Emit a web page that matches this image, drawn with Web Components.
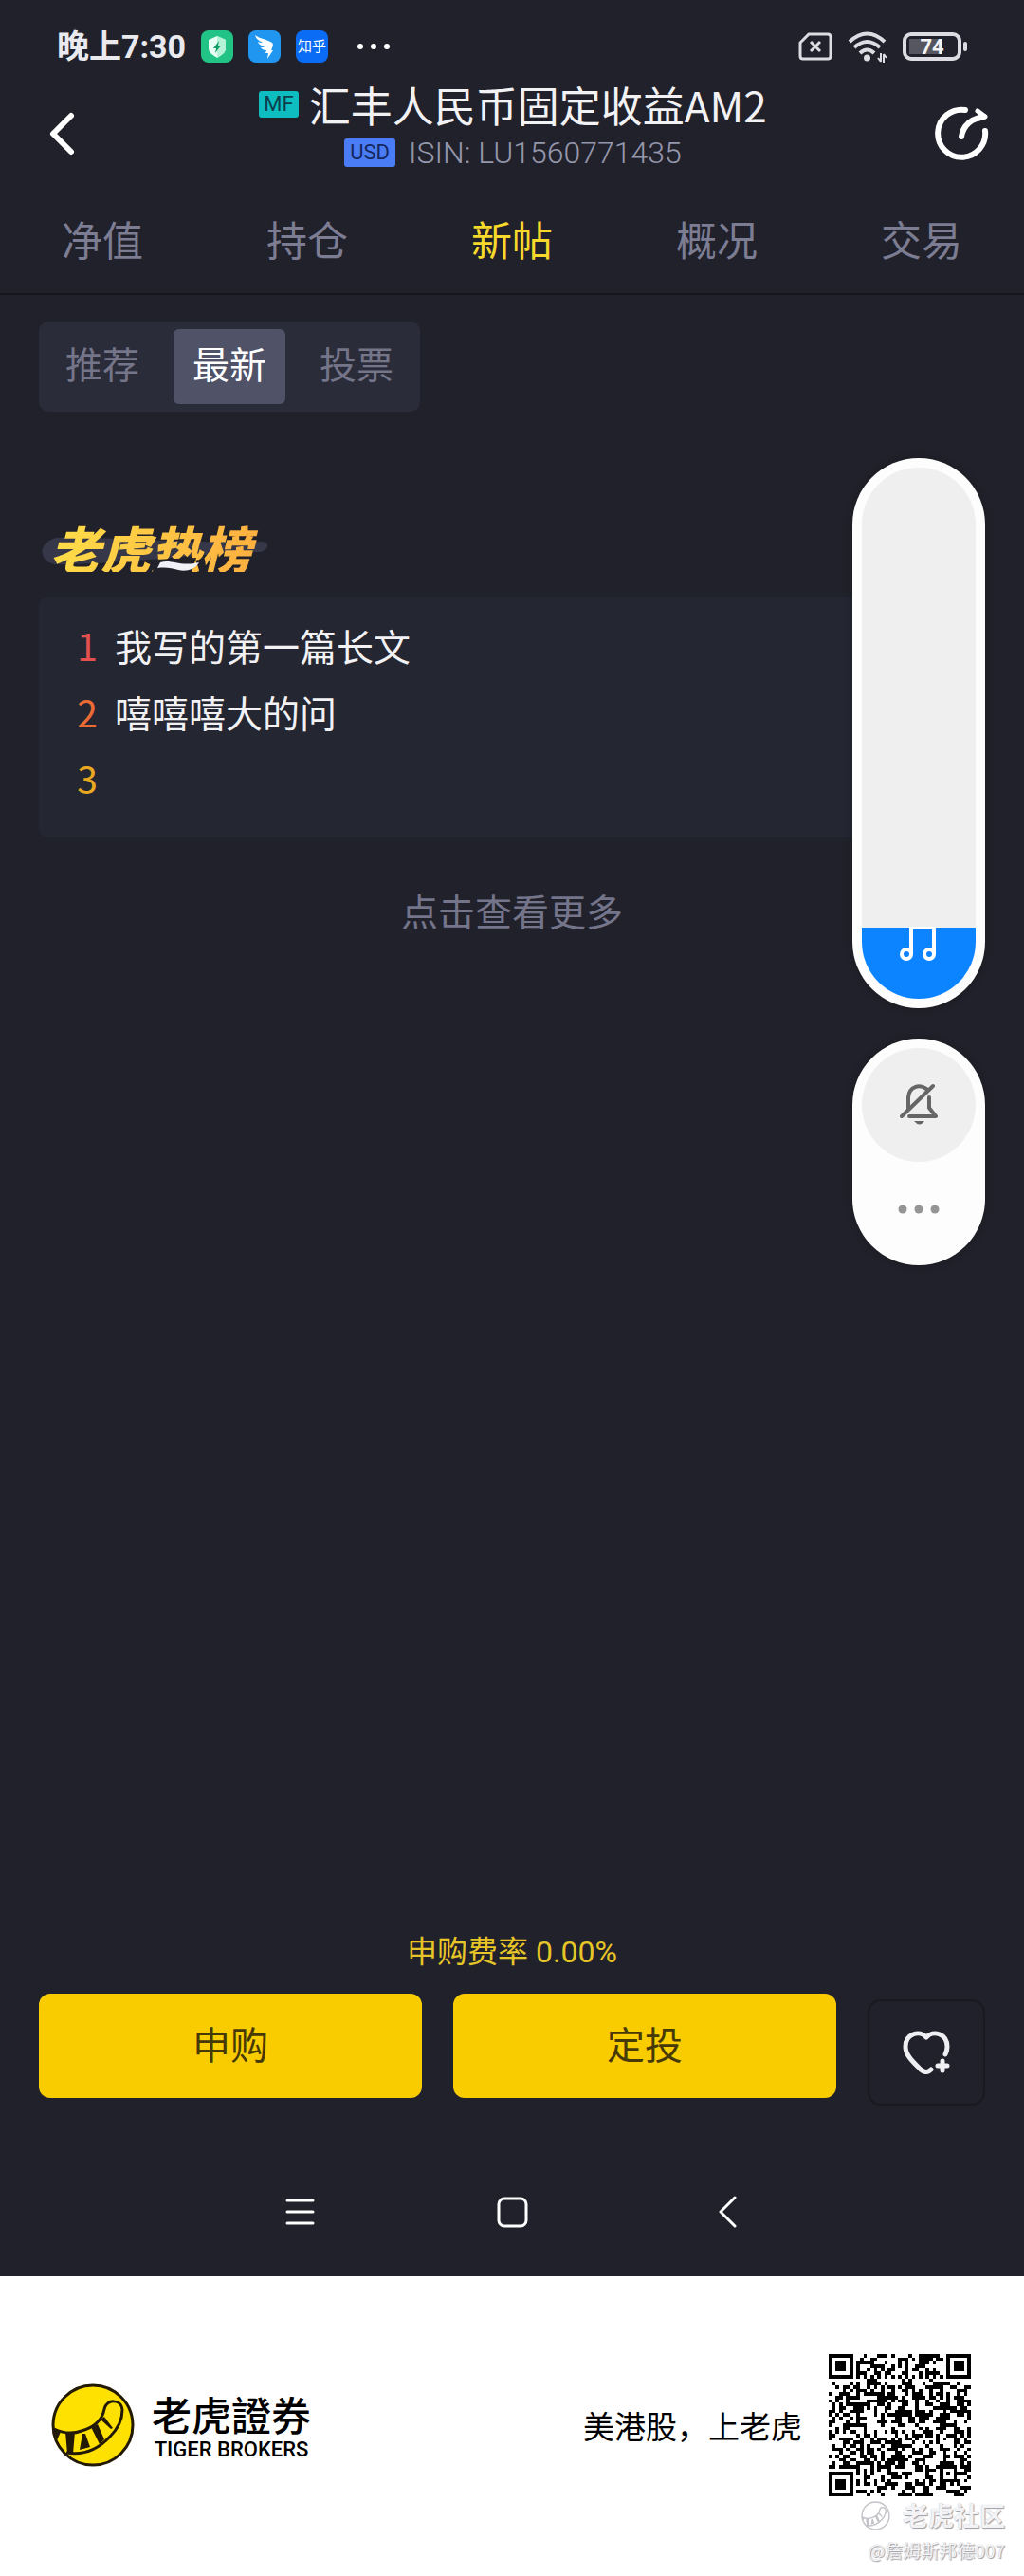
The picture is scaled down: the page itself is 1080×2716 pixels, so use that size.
<!DOCTYPE html>
<html lang="zh-CN">
<head>
<meta charset="utf-8">
<meta name="viewport" content="width=device-width, initial-scale=1">
<title>汇丰人民币固定收益AM2</title>
<style>
  html { --bg: #21212b; --muted: #7c7d93; --gutter: 41px; --yellow: #f9cc00; }
  body {
    margin: 0; min-height: 100vh; display: flex; flex-direction: column;
    background: #fff; color: #f2f2f5;
    font-family: Roboto, "Noto Sans CJK SC", sans-serif;
  }
  fund-screen { flex: 1; }
</style>
</head>
<body>
<fund-screen>
  <status-bar slot="top"></status-bar>
  <fund-header slot="top" kind="MF" currency="USD" isin="LU1560771435">汇丰人民币固定收益AM2</fund-header>
  <tab-strip slot="top" items="净值,持仓,新帖,概况,交易" active="新帖"></tab-strip>
  <segment-control items="推荐,最新,投票" active="最新"></segment-control>
  <hot-title>老虎热榜</hot-title>
  <hot-list>
    <hot-item rank="1">我写的第一篇长文</hot-item>
    <hot-item rank="2">嘻嘻嘻大的问</hot-item>
    <hot-item rank="3"></hot-item>
  </hot-list>
  <more-link>点击查看更多</more-link>
  <volume-panel slot="overlay"></volume-panel>
  <trade-bar slot="bottom" fee="申购费率 0.00%"></trade-bar>
  <system-nav slot="bottom"></system-nav>
</fund-screen>
<brand-footer>美港股，上老虎</brand-footer>

<script>
const define = (name, render) => customElements.define(name, class extends HTMLElement {
  connectedCallback() {
    if (this.shadowRoot) return;
    this.attachShadow({ mode: 'open' }).innerHTML =
      '<style>:host,*{box-sizing:border-box}button{font:inherit;color:inherit;background:none;border:0;padding:0;margin:0}a{color:inherit;text-decoration:none}svg{display:block}</style>' + render(this);
  }
});

define('fund-screen', () => `
  <style>
    :host { display: flex; flex-direction: column; position: relative; background: var(--bg); }
    main { flex: 1; display: flex; flex-direction: column; padding: 28px var(--gutter) 40px; }
  </style>
  <slot name="top"></slot>
  <main><slot></slot></main>
  <slot name="bottom"></slot>
  <slot name="overlay"></slot>`);

define('status-bar', () => `
  <style>
    :host { display: flex; justify-content: space-between; align-items: center; padding: 32px 66px 0 60px; }
    div { display: flex; align-items: center; gap: 16px; }
    time { font-size: 34px; line-height: 34px; font-weight: 700; color: #e9e9ee; }
    .zh { width: 34px; height: 34px; border-radius: 8px; background: #0a6cf5; color: #fff; font-size: 15px; line-height: 34px; text-align: center; }
    .more { margin-left: 14px; }
    .bat { width: 62px; height: 30px; border: 4px solid #dcdce2; border-radius: 9px; color: #f4f4f6;
      font-size: 22px; font-weight: 700; line-height: 23px; text-align: center; position: relative;
      background: linear-gradient(90deg, #55565f 33px, transparent 0) 3px 3px / 48px 16px no-repeat; }
    .bat::after { content: ""; position: absolute; right: -10px; top: 6px; width: 4px; height: 10px; border-radius: 2px; background: #dcdce2; }
  </style>
  <div>
    <time>晚上7:30</time>
    <svg width="34" height="34" viewBox="0 0 34 34"><rect width="34" height="34" rx="8" fill="#22c486"/><path d="M17 6l9 4v9c0 4-4 7-9 10-5-3-9-6-9-10v-9z" fill="#e8fff5"/><path d="M17 6l9 4v9c0 4-4 7-9 10z" fill="#b5f2d6"/><path d="M19 11l-6 8h3l-1 5 6-8h-3z" fill="#169a68"/></svg>
    <svg width="34" height="34" viewBox="0 0 34 34"><rect width="34" height="34" rx="8" fill="#2196f0"/><path d="M7 5c5 4 12 4 18 8 2 2 0 5-1 8h2l-6 9 1-6h-3l1-3c-3 0-5-1-6-3 2 0 3 0 4-1-4-1-6-2-7-5 2 1 3 1 5 1-4-2-7-4-8-8z" fill="#fff"/></svg>
    <span class="zh">知乎</span>
    <svg class="more" width="36" height="8" viewBox="0 0 36 8" fill="#fff"><circle cx="4" cy="4" r="3"/><circle cx="18" cy="4" r="3"/><circle cx="32" cy="4" r="3"/></svg>
  </div>
  <div>
    <svg width="36" height="30" viewBox="0 0 36 30" fill="none" stroke="#dcdce2" stroke-width="3"><path d="M11 2h20q3 0 3 3v20q0 3-3 3H5q-3 0-3-3V11z"/><path d="M13 10l10 10M23 10L13 20"/></svg>
    <svg width="42" height="34" viewBox="0 0 42 34" fill="none" stroke="#dcdce2" stroke-width="4"><path d="M2 12q18.500-17 37 0M7 18q13.500-12 27 0M13 24q7.500-7 15 0"/><circle cx="20.500" cy="29" r="3.500" fill="#dcdce2" stroke="none"/><path d="M35 24v9M32 29l3 4M38 34v-9M41 29l-3-4" stroke-width="2"/></svg>
    <span class="bat">74</span>
  </div>`);

define('fund-header', el => `
  <style>
    :host { display: flex; justify-content: space-between; align-items: center; padding: 18px 36px 2px 46px; }
    button { width: 58px; height: 58px; }
    button.back { width: 40px; }
    .mid { flex: 1; margin-left: 10px; padding-bottom: 12px; }
    h1, p { margin: 0; display: flex; justify-content: center; align-items: center; }
    h1 { font: 400 44px/52px "Noto Sans CJK SC", sans-serif; gap: 11px; }
    p { font-size: 32px; font-weight: 300; line-height: 50px; color: #9597ac; gap: 14px; }
    b { font: 400 22px/28px Roboto, sans-serif; padding: 0 5px; border-radius: 3px; background: #0dbdc0; color: #0c3f4b; }
    p b { line-height: 30px; padding: 0 6px; background: #4a7cf6; color: #14285e; }
  </style>
  <button class="back" aria-label="返回"><svg width="40" height="58" viewBox="0 0 40 58" fill="none" stroke="#fff" stroke-width="6" stroke-linecap="round" stroke-linejoin="round"><path d="M29 10L10 29l19 19"/></svg></button>
  <div class="mid">
    <h1><b>${el.getAttribute('kind')}</b><span><slot></slot></span></h1>
    <p><b>${el.getAttribute('currency')}</b><span>ISIN: ${el.getAttribute('isin')}</span></p>
  </div>
  <button aria-label="分享"><svg width="58" height="58" viewBox="0 0 58 58" fill="none" stroke="#fff" stroke-width="6" stroke-linecap="round" stroke-linejoin="round"><path d="M32 4A25 25 0 1 0 53 26"/><path d="M28 32q3-18 24-21"/><path d="M45 5l8 6-6 2" stroke-width="5"/></svg></button>`);

define('tab-strip', el => `
  <style>
    :host { display: block; border-bottom: 2px solid #16161e; }
    nav { display: flex; padding-top: 2px; }
    a { flex: 1; text-align: center; font-size: 43px; line-height: 107px; color: var(--muted); }
    a[aria-current] { color: #f6d92b; }
  </style>
  <nav>${el.getAttribute('items').split(',').map(t => `<a href="#"${t === el.getAttribute('active') ? ' aria-current="page"' : ''}>${t}</a>`).join('')}</nav>`);

define('segment-control', el => `
  <style>
    :host { display: flex; align-self: flex-start; gap: 16px; padding: 8px; border-radius: 10px; background: #2b2c39; }
    button { width: 118px; font-size: 39px; line-height: 79px; color: #747589; border-radius: 6px; }
    button[aria-pressed=true] { background: #505268; color: #fff; }
  </style>
  ${el.getAttribute('items').split(',').map(t => `<button aria-pressed="${t === el.getAttribute('active')}">${t}</button>`).join('')}`);

define('hot-title', () => `
  <style>
    :host { display: block; align-self: flex-start; position: relative; margin: 117px 0 26px; }
    h2 { margin: 0; padding: 0 24px 0 12px; position: relative; font: italic 900 53px/52px "Noto Sans CJK SC", sans-serif;
      color: transparent; background: linear-gradient(105deg, #ffdc48 10%, #fdb040 90%); -webkit-background-clip: text; background-clip: text; }
    svg { position: absolute; left: 0; top: 0; }
  </style>
  <svg width="244" height="52" viewBox="0 0 244 52"><path d="M18 16C60 14 150 22 236 20c8 1 6 9-2 11C170 32 80 45 16 44 0 40-2 22 18 16z" fill="#363748"/></svg>
  <h2><slot></slot></h2>
  <svg width="244" height="52" viewBox="0 0 244 52"><path d="M122 39l44-2-5 15h-41z" fill="#21212b"/><path d="M128 42c12-4 20 5 41 0-5 8-14 10-22 8-7-2-13-3-22-2z" fill="#eff1f7"/></svg>`);

define('hot-list', () => `
  <style>:host { display: flex; flex-direction: column; padding: 16px 38px 28px; border-radius: 10px; background: #242632; }</style>
  <slot></slot>`);

define('hot-item', el => `
  <style>
    :host { display: flex; gap: 16px; font: 400 39px/70px "Noto Sans CJK SC", sans-serif; }
    i { font-style: normal; width: 26px; text-align: center; color: ${['#e4504f', '#ec6b35', '#e9a820'][el.getAttribute('rank') - 1]}; }
  </style>
  <i>${el.getAttribute('rank')}</i><span><slot></slot></span>`);

define('more-link', () => `
  <style>:host { display: block; text-align: center; margin-top: 52px; font-size: 39px; line-height: 56px; color: #74758b; }</style>
  <a href="#"><slot></slot></a>`);

define('volume-panel', () => `
  <style>
    :host { position: absolute; right: var(--gutter); top: 483px; width: 140px; display: flex; flex-direction: column; gap: 32px; }
    .pill { position: relative; background: #fdfdfd; border-radius: 70px; padding: 10px; box-shadow: 0 0 8px rgba(0,0,0,.25); }
    input { display: block; appearance: none; writing-mode: vertical-lr; direction: rtl; margin: 0; width: 120px; height: 560px;
      border-radius: 60px; background: linear-gradient(to top, #0d84ff 75px, #efefef 0); }
    input::-webkit-slider-thumb { appearance: none; width: 120px; height: 2px; background: transparent; }
    .note { position: absolute; left: 50px; bottom: 49px; pointer-events: none; }
    .mute { display: flex; align-items: center; justify-content: center; width: 120px; height: 120px; border-radius: 50%; background: #efefef; }
    .dots { display: flex; align-items: center; justify-content: center; width: 120px; height: 99px; }
  </style>
  <div class="pill">
    <input type="range" min="0" max="100" value="13" aria-label="媒体音量">
    <svg class="note" width="40" height="38" viewBox="0 0 40 38" fill="none" stroke="#fff" stroke-width="4"><ellipse cx="7" cy="30" rx="5" ry="5"/><ellipse cx="31" cy="30" rx="5" ry="5"/><path d="M12 30V4M36 30V4"/><path d="M10 2h28" stroke-width="2"/></svg>
  </div>
  <div class="pill">
    <button class="mute" aria-label="静音"><svg width="40" height="46" viewBox="0 0 40 46" fill="none" stroke="#666" stroke-width="4" stroke-linecap="round" stroke-linejoin="round"><path d="M2 35L35 3M9 27V15C10 3 21 1 28 6M31 15v11l7 9H10"/><path d="M15 40h11q-5 7-11 0z" fill="#666" stroke="none"/></svg></button>
    <button class="dots" aria-label="更多"><svg width="46" height="10" viewBox="0 0 46 10" fill="#959595"><circle cx="6" cy="5" r="4.500"/><circle cx="23" cy="5" r="4.500"/><circle cx="40" cy="5" r="4.500"/></svg></button>
  </div>`);

define('trade-bar', el => `
  <style>
    :host { display: block; padding: 0 var(--gutter); }
    p { margin: 0 0 21px; text-align: center; font-size: 32px; line-height: 46px; color: #e6c527; }
    div { display: flex; align-items: flex-start; gap: 33px; }
    .buy { flex: 1; height: 110px; padding-bottom: 6px; border-radius: 12px; background: var(--yellow); color: #473906; font-size: 40px; }
    .fav { width: 124px; height: 112px; margin-top: 6px; border: 2px solid #191921; border-radius: 14px; display: flex; align-items: center; justify-content: center; }
  </style>
  <p>${el.getAttribute('fee')}</p>
  <div>
    <button class="buy">申购</button>
    <button class="buy">定投</button>
    <button class="fav" aria-label="收藏"><svg width="50" height="46" viewBox="0 0 50 46" fill="none" stroke="#efeff3" stroke-width="5" stroke-linecap="round" stroke-linejoin="round"><path d="M30 41q-5 5-11 0C11 33 3 26 3 17 3 3 18-1 25 7 32-1 47 3 47 17q0 4-2 8"/><path d="M42 32v10M37 37h10"/></svg></button>
  </div>`);

define('system-nav', () => `
  <style>
    :host { display: flex; justify-content: center; gap: 180px; padding: 90px 0 46px; }
    button { width: 44px; height: 44px; }
    svg { fill: none; stroke: #fff; stroke-width: 3; stroke-linecap: round; stroke-linejoin: round; }
  </style>
  <button aria-label="任务"><svg width="44" height="44" viewBox="0 0 44 44"><path d="M9 10h27M9 22h27M9 34h27"/></svg></button>
  <button aria-label="主页"><svg width="44" height="44" viewBox="0 0 44 44"><rect x="8" y="8" width="29" height="29" rx="6"/></svg></button>
  <button aria-label="返回"><svg width="44" height="44" viewBox="0 0 44 44"><path d="M33 7L18 22l15 15"/></svg></button>`);

const tiger = `<g fill="none" stroke-linejoin="round"><path d="M3 48C14 53 24 53 32 50 46 46 54 38 56 27 58 16 74 16 75 28 75 38 70 48 62 56 50 69 34 76 16 73"/></g>
  <path d="M2 46l8 5-4 9zM15 51h10l-2 23h-6zM33 53h3l5 14-11 3zM42 46l7-3 7 16-5 5zM52 38l4-3 9 12-2 1z" stroke="none" fill="currentColor"/>`;

define('qr-code', () => {
  const n = 41, cells = [];
  let seed = 20177;
  const rand = () => (seed = (seed * 1103515245 + 12345) % 2147483648) / 2147483648;
  const ring = (x, y, cx, cy) => Math.max(Math.abs(x - cx), Math.abs(y - cy));
  for (let y = 0; y < n; y++) for (let x = 0; x < n; x++) {
    let on = rand() > 0.5;
    for (const [cx, cy] of [[3, 3], [n - 4, 3], [3, n - 4]]) {
      const d = ring(x, y, cx, cy);
      if (d <= 4) on = d < 2 || d === 3;
    }
    if (ring(x, y, n - 7, n - 7) <= 2) on = ring(x, y, n - 7, n - 7) !== 1;
    if ((y === 6 && x > 7 && x < n - 8) || (x === 6 && y > 7 && y < n - 8)) on = (x + y) % 2 === 0;
    if (on) cells.push(`M${x} ${y}h1v1h-1z`);
  }
  return `<style>:host { display: block; width: 150px; height: 150px; }</style>
    <svg width="150" height="150" viewBox="0 0 41 41" shape-rendering="crispEdges" role="img" aria-label="二维码"><path d="${cells.join('')}"/></svg>`;
});

define('brand-footer', () => `
  <style>
    :host { display: flex; align-items: center; justify-content: space-between; position: relative; padding: 82px 56px 84px 54px; background: #fff; color: #000; }
    .brand, .promo { display: flex; align-items: center; }
    .brand { gap: 18px; }
    .promo { gap: 28px; font-size: 33px; }
    .name { display: flex; flex-direction: column; align-items: center; padding-top: 2px; }
    .name b { font: 500 42px/50px "Noto Sans CJK TC", sans-serif; }
    .name span { font-size: 22px; font-weight: 500; line-height: 26px; }
    .mark { position: absolute; right: 20px; bottom: 13px; display: flex; flex-direction: column; align-items: flex-end; color: #f3f3f5;
      text-shadow: 1px 1px 1px #9c9ca4, 0 0 1px #b4b4bc; font: 400 19px/28px "Noto Sans CJK SC", sans-serif; }
    .mark div { display: flex; align-items: center; gap: 13px; font-size: 27px; font-weight: 700; line-height: 46px; }
  </style>
  <div class="brand">
    <svg width="88" height="88" viewBox="0 0 88 88" color="#231a05" stroke="#231a05" stroke-width="3"><circle cx="44" cy="44" r="42" fill="#fee100"/>${tiger}</svg>
    <div class="name"><b>老虎證券</b><span>TIGER BROKERS</span></div>
  </div>
  <div class="promo"><span><slot></slot></span><qr-code></qr-code></div>
  <div class="mark">
    <div><svg width="31" height="31" viewBox="0 0 88 88" color="#c3c3c9" stroke="#c3c3c9" stroke-width="4"><circle cx="44" cy="44" r="41" fill="none"/>${tiger}</svg><span>老虎社区</span></div>
    <span>@詹姆斯邦德007</span>
  </div>`);
</script>
</body>
</html>
